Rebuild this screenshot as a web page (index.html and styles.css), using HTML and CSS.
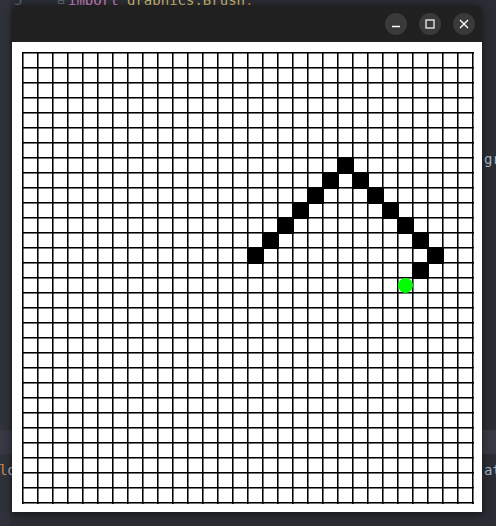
FILE: index.html
```html
<!DOCTYPE html>
<html>
<head>
<meta charset="utf-8">
<link rel="stylesheet" href="styles.css">
</head>
<body>
<div class="editor">
  <div class="line top-line"><span class="ln">5</span><span class="fold">⊟</span><span class="kw">import</span>&nbsp;<span class="pkg">graphics.Brush</span><span class="punct">;</span></div>
  <div class="gap g1"></div>
  <div class="line"><span class="right">gr</span></div>
  <div class="gap g2"></div>
  <div class="band"></div>
  <div class="gap g3"></div>
  <div class="line"><span class="left"><span class="kw2">l</span>d</span><span class="right">at</span></div>
</div>

<div class="window">
  <div class="titlebar">
    <button class="tbtn" aria-label="minimize">
      <svg width="10" height="10" viewBox="0 0 10 10"><path d="M1 7.5 H9" stroke="#fff" stroke-width="1.3" fill="none"/></svg>
    </button>
    <button class="tbtn" aria-label="maximize">
      <svg width="10" height="10" viewBox="0 0 10 10"><rect x="1" y="1" width="8" height="8" stroke="#fff" stroke-width="1.2" fill="none"/></svg>
    </button>
    <button class="tbtn" aria-label="close">
      <svg width="10" height="10" viewBox="0 0 10 10"><path d="M1 1 L9 9 M9 1 L1 9" stroke="#fff" stroke-width="1.3" fill="none"/></svg>
    </button>
  </div>
  <div class="content">
    <div class="board">
      <div class="cell" style="grid-column:22;grid-row:8"></div>
      <div class="cell" style="grid-column:21;grid-row:9"></div>
      <div class="cell" style="grid-column:23;grid-row:9"></div>
      <div class="cell" style="grid-column:20;grid-row:10"></div>
      <div class="cell" style="grid-column:24;grid-row:10"></div>
      <div class="cell" style="grid-column:19;grid-row:11"></div>
      <div class="cell" style="grid-column:25;grid-row:11"></div>
      <div class="cell" style="grid-column:18;grid-row:12"></div>
      <div class="cell" style="grid-column:26;grid-row:12"></div>
      <div class="cell" style="grid-column:17;grid-row:13"></div>
      <div class="cell" style="grid-column:27;grid-row:13"></div>
      <div class="cell" style="grid-column:16;grid-row:14"></div>
      <div class="cell" style="grid-column:28;grid-row:14"></div>
      <div class="cell" style="grid-column:27;grid-row:15"></div>
      <div class="food" style="grid-column:26;grid-row:16"></div>
    </div>
  </div>
</div>
</body>
</html>
```

FILE: styles.css
```css
* { box-sizing: border-box; }
html, body {
  margin: 0;
  padding: 0;
  width: 496px;
  height: 526px;
  overflow: hidden;
}
body {
  background: #2b2d34;
  font-family: "DejaVu Sans Mono", "Liberation Mono", monospace;
  font-size: 14px;
  color: #a9b7c6;
  position: relative;
}
.editor {
  display: flex;
  flex-direction: column;
  height: 526px;
  background: linear-gradient(to right, #30323b 0, #30323b 10px, #2b2d34 10px);
}
.line {
  display: flex;
  align-items: center;
  height: 18px;
  white-space: nowrap;
  position: relative;
}
.top-line {
  margin-top: -9px;
  height: 18px;
}
.ln { width: 58px; padding-left: 14px; color: #5c6070; }
.fold { width: 10px; color: #6b6f7a; font-size: 11px; }
.kw { color: #c77dbb; }
.pkg { color: #c9b46b; }
.punct { color: #cc7832; }
.kw2 { color: #cc8a4a; }
.gap { flex: none; }
.g1 { height: 141px; }
.g2 { height: 262px; }
.band { height: 24px; background: #373a44; flex: none; }
.g3 { height: 7px; }
.left { margin-left: -1px; }
.right { margin-left: auto; width: 12px; overflow: visible; color: #a9b7c6; }

.window {
  position: absolute;
  left: 12px;
  top: 5px;
  width: 470px;
  border-radius: 8px 8px 0 0;
  box-shadow: 0 2px 8px rgba(0, 0, 0, 0.55);
  overflow: hidden;
}
.titlebar {
  height: 37px;
  background: #202020;
  display: flex;
  justify-content: flex-end;
  align-items: center;
  gap: 12px;
  padding-right: 7px;
}
.tbtn {
  width: 22px;
  height: 22px;
  border-radius: 50%;
  background: #3a3a3a;
  border: none;
  padding: 0;
  display: flex;
  align-items: center;
  justify-content: center;
}
.content {
  background: #fff;
  height: 470px;
  padding: 10px 8px 8px 10px;
}
.board {
  width: 452px;
  height: 452px;
  display: grid;
  grid-template-columns: repeat(30, 15px);
  grid-template-rows: repeat(30, 15px);
  background-color: #fff;
  background-image:
    linear-gradient(to right, #000 1px, rgba(0, 0, 0, 0.55) 1px, rgba(0, 0, 0, 0.55) 2px, transparent 2px),
    linear-gradient(to bottom, #000 1px, rgba(0, 0, 0, 0.55) 1px, rgba(0, 0, 0, 0.55) 2px, transparent 2px);
  background-size: 15px 15px;
}
.cell {
  width: 17px;
  height: 17px;
  background: #000;
}
.food {
  width: 15px;
  height: 15px;
  margin: 1px 0 0 1px;
  border-radius: 50%;
  background: #00ff00;
}
```
